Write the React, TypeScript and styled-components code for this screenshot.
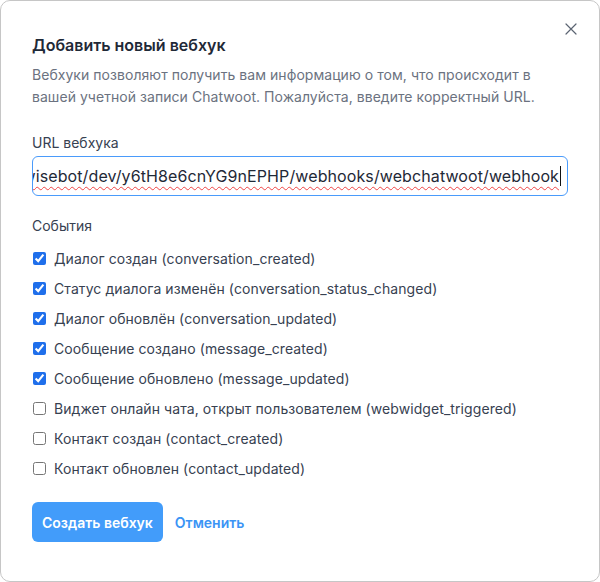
import React from "react";
import styled, { createGlobalStyle } from "styled-components";

const Global = createGlobalStyle`
  html, body { margin: 0; padding: 0; background: #ffffff; }
  body { font-family: Inter, "Noto Sans", sans-serif; -webkit-font-smoothing: antialiased; }
  * { box-sizing: border-box; }
`;

const Dialog = styled.div`
  position: relative;
  width: 600px;
  height: 582px;
  border: 1px solid #c6c6c6;
  border-radius: 10px;
  background: #fff;
  padding: 32px 31px 40px 31px;
  display: flex;
  flex-direction: column;
`;

const CloseButton = styled.button`
  position: absolute;
  top: 20px;
  right: 20px;
  width: 16px;
  height: 16px;
  padding: 0;
  border: none;
  background: transparent;
  color: #5b6472;
  display: flex;
  align-items: center;
  justify-content: center;
`;

const Title = styled.h2`
  margin: 0;
  font-size: 16px;
  line-height: 24px;
  font-weight: 600;
  color: #1f2937;
`;

const Description = styled.p`
  margin: 7px 0 0 0;
  font-size: 14px;
  line-height: 22px;
  color: #6b7280;
  letter-spacing: 0.05px;
`;

const Field = styled.div`
  margin-top: 25px;
  display: flex;
  flex-direction: column;
`;

const Label = styled.label`
  font-size: 14px;
  line-height: 20px;
  color: #374151;
  margin-bottom: 3px;
`;

const UrlBox = styled.div`
  width: 100%;
  height: 40px;
  border: 1px solid #4a9bfb;
  border-radius: 6px;
  padding: 0 6px 0 8px;
  display: flex;
  align-items: center;
  justify-content: flex-end;
  overflow: hidden;
  font-size: 16px;
  color: #1f2937;
  cursor: text;
`;

const UrlText = styled.span`
  white-space: nowrap;
  flex-shrink: 0;
  letter-spacing: 0.1px;
  text-decoration: underline wavy #ef4444;
  text-decoration-thickness: 1px;
  text-underline-offset: 4px;
  text-decoration-skip-ink: none;
`;

const Caret = styled.span`
  flex-shrink: 0;
  width: 1px;
  height: 20px;
  margin-left: 1px;
  background: #111;
`;

const Events = styled.div`
  margin-top: 20px;
  display: flex;
  flex-direction: column;
`;

const EventsLabel = styled.div`
  font-size: 14px;
  line-height: 20px;
  color: #374151;
  margin-bottom: 7px;
`;

const Row = styled.label`
  display: flex;
  align-items: center;
  height: 30px;
  gap: 8px;
  font-size: 14px;
  color: #374151;
  letter-spacing: 0.08px;
`;

const Check = styled.input`
  width: 13px;
  height: 13px;
  margin: 0 0 0 1px;
  accent-color: #1f6feb;
`;

const Actions = styled.div`
  margin-top: 19px;
  display: flex;
  align-items: center;
  gap: 12px;
`;

const Primary = styled.button`
  height: 40px;
  padding: 0 10px;
  border: none;
  border-radius: 6px;
  background: #429cfa;
  color: #fff;
  font-family: Inter, "Noto Sans", sans-serif;
  font-size: 14px;
  font-weight: 600;
`;

const Link = styled.button`
  border: none;
  background: transparent;
  padding: 0;
  color: #3b94f5;
  font-family: Inter, "Noto Sans", sans-serif;
  font-size: 14px;
  font-weight: 600;
`;

const events: [string, boolean][] = [
  ["Диалог создан (conversation_created)", true],
  ["Статус диалога изменён (conversation_status_changed)", true],
  ["Диалог обновлён (conversation_updated)", true],
  ["Сообщение создано (message_created)", true],
  ["Сообщение обновлено (message_updated)", true],
  ["Виджет онлайн чата, открыт пользователем (webwidget_triggered)", false],
  ["Контакт создан (contact_created)", false],
  ["Контакт обновлен (contact_updated)", false],
];

export default function App() {
  return (
    <>
      <Global />
      <Dialog>
        <CloseButton aria-label="Закрыть">
          <svg width="12" height="12" viewBox="0 0 12 12" fill="none">
            <path d="M1 1L11 11M11 1L1 11" stroke="currentColor" strokeWidth="1.2" strokeLinecap="round" />
          </svg>
        </CloseButton>
        <Title>Добавить новый вебхук</Title>
        <Description>
          Вебхуки позволяют получить вам информацию о том, что происходит в
          вашей учетной записи Chatwoot. Пожалуйста, введите корректный URL.
        </Description>
        <Field>
          <Label>URL вебхука</Label>
          <UrlBox role="textbox" aria-label="URL вебхука">
            <UrlText>https://n8n.wisebot/dev/y6tH8e6cnYG9nEPHP/webhooks/webchatwoot/webhook</UrlText>
            <Caret />
          </UrlBox>
        </Field>
        <Events>
          <EventsLabel>События</EventsLabel>
          {events.map(([text, checked]) => (
            <Row key={text}>
              <Check type="checkbox" defaultChecked={checked} />
              {text}
            </Row>
          ))}
        </Events>
        <Actions>
          <Primary>Создать вебхук</Primary>
          <Link>Отменить</Link>
        </Actions>
      </Dialog>
    </>
  );
}
